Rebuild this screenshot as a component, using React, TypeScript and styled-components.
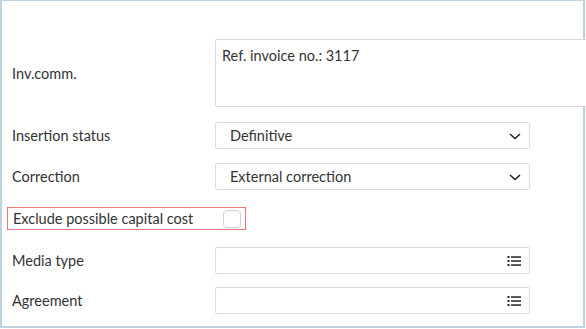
import styled, { createGlobalStyle } from "styled-components";

const GlobalStyle = createGlobalStyle`
  body {
    margin: 0;
    background: #fff;
    font-family: "Lato", "Open Sans", sans-serif;
    overflow: hidden;
  }
`;

const Frame = styled.div`
  box-sizing: border-box;
  width: 585px;
  height: 328px;
  border-style: solid;
  border-color: #bfd2e0;
  border-width: 1px 2px 2px 2px;
  padding: 38px 0 0 10px;
  display: flex;
  flex-direction: column;
`;

const Row = styled.div<{ $top: number }>`
  display: grid;
  grid-template-columns: 203px auto;
  align-items: center;
  margin-top: ${(p) => p.$top}px;
  font-size: 14.5px;
  color: #333;
`;

const Label = styled.div`
  font-size: 14.5px;
  color: #333;
`;

const TextBox = styled.div`
  box-sizing: border-box;
  width: 380px;
  height: 68px;
  border: 1px solid #d9d9d9;
  border-radius: 2px;
  background: #fff;
  padding: 7px 6px;
  font-size: 14.5px;
  color: #333;
`;

const Field = styled.div`
  box-sizing: border-box;
  width: 315px;
  height: 27px;
  border: 1px solid #dcdcdc;
  border-radius: 2px;
  background: #fff;
  display: flex;
  align-items: center;
  justify-content: space-between;
  padding: 0 7px 0 14px;
  font-size: 14.5px;
  color: #333;
`;

const CheckRow = styled.div`
  box-sizing: border-box;
  width: 239px;
  height: 23px;
  margin: 17px 0 0 -5px;
  padding: 0 4px 0 5px;
  border: 1px solid rgb(240, 120, 120);
  display: flex;
  align-items: center;
  justify-content: space-between;
  font-size: 14.5px;
  color: #333;
`;

const Box = styled.span`
  box-sizing: border-box;
  width: 18px;
  height: 18px;
  border: 1px solid #d0d0d0;
  border-radius: 4px;
  background: #fff;
`;

const Chevron = () => (
  <svg width="14" height="14" viewBox="0 0 14 14">
    <polyline points="2,5 7,9.5 12,5" fill="none" stroke="#222" strokeWidth="1.6" />
  </svg>
);

const ListIcon = () => (
  <svg width="15" height="14" viewBox="0 0 15 14">
    <g fill="#222">
      <rect x="0.5" y="2" width="2" height="2" />
      <rect x="0.5" y="6" width="2" height="2" />
      <rect x="0.5" y="10" width="2" height="2" />
      <rect x="4" y="2.3" width="10" height="1.5" />
      <rect x="4" y="6.3" width="10" height="1.5" />
      <rect x="4" y="10.3" width="10" height="1.5" />
    </g>
  </svg>
);

const App = () => {
  return (
    <>
      <GlobalStyle />
      <Frame>
        <Row $top={0}>
          <Label>Inv.comm.</Label>
          <TextBox>Ref. invoice no.: 3117</TextBox>
        </Row>
        <Row $top={15}>
          <Label>Insertion status</Label>
          <Field>
            <span>Definitive</span>
            <Chevron />
          </Field>
        </Row>
        <Row $top={14}>
          <Label>Correction</Label>
          <Field>
            <span>External correction</span>
            <Chevron />
          </Field>
        </Row>
        <CheckRow>
          <span>Exclude possible capital cost</span>
          <Box />
        </CheckRow>
        <Row $top={17}>
          <Label>Media type</Label>
          <Field>
            <span />
            <ListIcon />
          </Field>
        </Row>
        <Row $top={13}>
          <Label>Agreement</Label>
          <Field>
            <span />
            <ListIcon />
          </Field>
        </Row>
      </Frame>
    </>
  );
};

export default App;
